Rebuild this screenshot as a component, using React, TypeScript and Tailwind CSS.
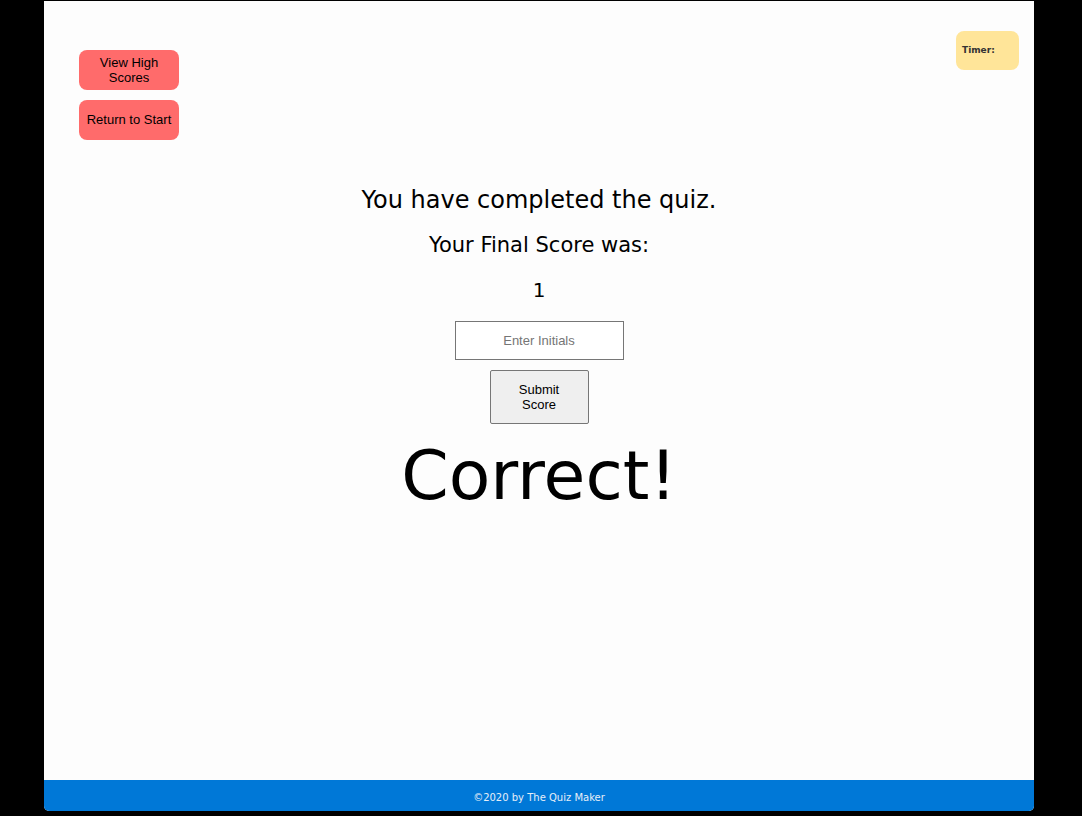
export default function App() {
  return (
    <div className="min-h-[816px] bg-black pt-px">
      <div className="ml-[44px] flex h-[810px] w-[990px] flex-col overflow-hidden rounded-b-[5px] bg-[#fdfdfd]">
        <div className="flex items-start justify-between">
          <div className="flex flex-col gap-[10px] pl-[35px] pt-[49px]">
            <button className="h-10 w-[100px] rounded-lg bg-[#ff6b6b] px-2 text-[13px] leading-[15px] text-black font-['Liberation_Sans',Arial,sans-serif]">
              View High
              <br />
              Scores
            </button>
            <button className="h-10 w-[100px] rounded-lg bg-[#ff6b6b] px-1 pb-[2px] text-[13px] leading-[15px] text-black font-['Liberation_Sans',Arial,sans-serif]">
              Return to Start
            </button>
          </div>
          <div className="mr-[15px] mt-[30px] flex h-[39px] w-[63px] items-center rounded-lg bg-[#ffe599] pl-[6px] text-[9px] font-bold text-[#333] font-['DejaVu_Sans',Verdana,sans-serif]">
            Timer:
          </div>
        </div>

        <main className="flex flex-1 flex-col items-center pt-[45px] font-['DejaVu_Sans',Verdana,sans-serif] text-black">
          <h2 className="text-[24px] leading-[30px]">You have completed the quiz.</h2>
          <p className="mt-[18px] text-[21px] leading-[24px]">Your Final Score was:</p>
          <p className="mt-[21px] text-[20px] leading-[24px]">1</p>
          <input
            placeholder="Enter Initials"
            className="mt-[19px] h-[39px] w-[169px] border border-[#767676] bg-white text-center text-[13px] text-black placeholder:text-[#757575] font-['Liberation_Sans',Arial,sans-serif] outline-none"
          />
          <button className="mt-[10px] h-[54px] w-[99px] rounded-[2px] border border-[#767676] bg-[#efefef] text-[13px] leading-[15px] text-black font-['Liberation_Sans',Arial,sans-serif]">
            Submit
            <br />
            Score
          </button>
          <h1 className="mt-[10px] text-[68px] leading-[84px]">Correct!</h1>
        </main>

        <footer className="flex h-[31px] items-center justify-center bg-[#0078d7] pt-[3px] text-[10px] text-[#e6eef7] font-['DejaVu_Sans',Verdana,sans-serif]">
          ©2020 by The Quiz Maker
        </footer>
      </div>
    </div>
  );
}
